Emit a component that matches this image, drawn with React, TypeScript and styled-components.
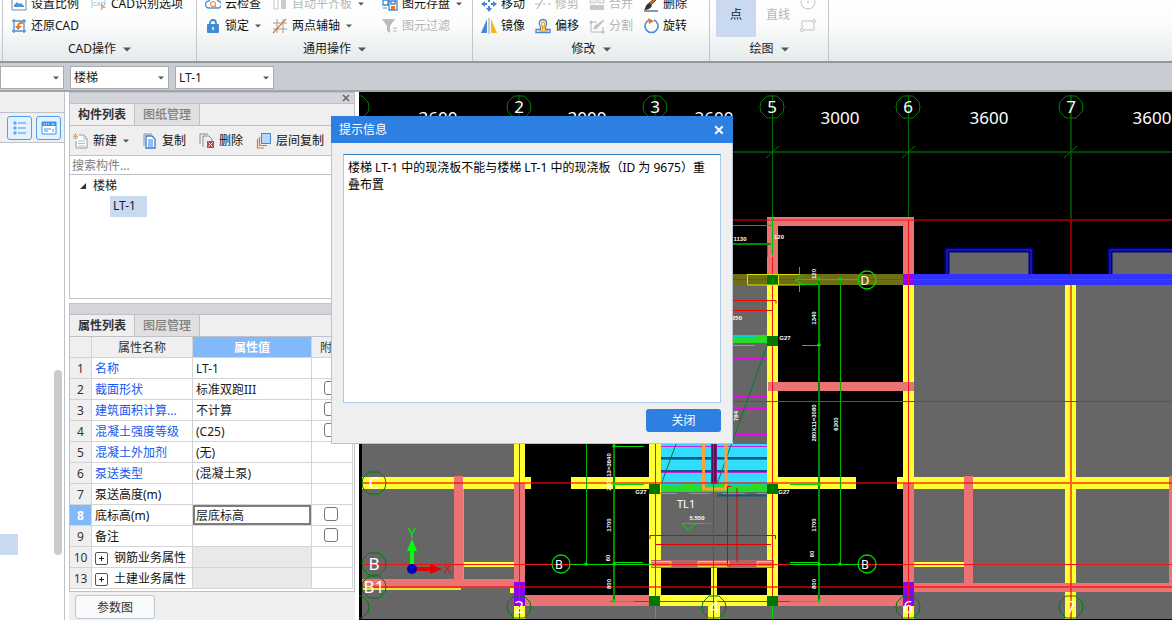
import React from 'react';
import styled, { createGlobalStyle, css } from 'styled-components';

const GlobalStyle = createGlobalStyle`
  *, *::before, *::after { box-sizing: border-box; }
  body {
    margin: 0;
    background: #fff;
    color: #1a1a1a;
    font: 12px/16px "Noto Sans", "Noto Sans CJK SC", sans-serif;
  }
  button, input, select, textarea { font: inherit; color: inherit; }
`;

const Page = styled.div`
  position: relative;
  display: flex;
  flex-direction: column;
  height: 100vh;
  overflow: hidden;
`;

/* ---------- Ribbon ---------- */

const Ribbon = styled.header`
  display: flex;
  flex: none;
  height: 63px;
  overflow: hidden;
  padding-left: 2px;
  background: linear-gradient(#ffffff, #fbfcfc 40%, #e6eaea);
  border-bottom: 2px solid #92979c;
`;

const Group = styled.section<{ $width: number }>`
  display: flex;
  flex-direction: column;
  justify-content: flex-end;
  flex: none;
  width: ${p => p.$width}px;
  border-right: 1px solid #c3c5c8;
  &:first-child { border-left: 1px solid #c3c5c8; }
`;

const Tools = styled.div<{ $columns: string }>`
  display: grid;
  grid-template-columns: ${p => p.$columns};
  grid-auto-rows: 22px;
  padding-left: 8px;
`;

const Tool = styled.button`
  display: flex;
  align-items: center;
  gap: 4px;
  padding: 0;
  border: 0;
  background: none;
  white-space: nowrap;
  color: #111;
  &:disabled { color: #b4b6b8; }
`;

const GroupTitle = styled.h2`
  display: flex;
  flex: none;
  align-items: center;
  justify-content: center;
  gap: 5px;
  height: 24px;
  margin: 0;
  font-size: 12px;
  font-weight: 400;
`;

const DrawTools = styled.div`
  display: flex;
  align-items: flex-end;
  gap: 10px;
  height: 44px;
  padding-left: 6px;
`;

const BigTool = styled.button<{ $active?: boolean }>`
  display: flex;
  align-items: flex-end;
  justify-content: center;
  width: ${p => (p.$active ? 40 : 24)}px;
  height: 44px;
  padding: 0 0 14px;
  border: 0;
  white-space: nowrap;
  background: ${p => (p.$active ? '#c9d9f0' : 'none')};
  &:disabled { color: #b4b6b8; }
`;

const ShapeColumn = styled.div`
  display: grid;
  gap: 6px;
  padding-bottom: 4px;
`;

const Caret = ({ size = 6 }: { size?: number }) => (
  <svg width={size} height={size / 2 + 1} viewBox="0 0 8 4" aria-hidden="true" style={{ marginLeft: 2 }}>
    <path d="M0 0h8L4 4z" fill="#555" />
  </svg>
);

const icons: Record<string, React.ReactNode> = {
  scale: <><path d="M1 2h14v12H1z" fill="#fff" stroke="#7d8a96" /><path d="M3 11V9l3-3 2 2 2-1 3 3v1z" fill="#4b94dc" /></>,
  cadId: <><path d="M1 12V3h13v6" fill="none" stroke="#a9c6e6" /><text x="2" y="10" fontSize="6" fill="#7badde">CAD</text><path d="M10 7l5 5-3 0-2 3z" fill="#f0a080" /></>,
  restore: <><path d="M3 1v14M13 1v14M1 3h14M1 13h14" fill="none" stroke="#4d8fcf" strokeWidth="1.3" /><path d="M12 5C9 4 7 6 7 9" fill="none" stroke="#ec7420" strokeWidth="2" /><path d="M4 8l3 4 4-4z" fill="#ec7420" /></>,
  cloud: <><path d="M4 12a3.500 3.500 0 010-7 5 5 0 019 0 3.500 3.500 0 010 7z" fill="none" stroke="#4d94e0" strokeWidth="1.400" /><circle cx="8" cy="8" r="2.500" fill="none" stroke="#ec7420" /><path d="M10 10l2 2" stroke="#ec7420" /></>,
  level: <><path d="M2 2h4v11H2z" fill="none" stroke="#c7c7c7" /><path d="M9 2h5v11H9z" fill="#ccc" /></>,
  save: <><path d="M1 4h5v5H1zM7 5h8v9H7zM9 5v3h4V5" fill="#fff" stroke="#4289ce" strokeWidth="1.300" /><path d="M9 10h4v4H9z" fill="#ec7420" /><path d="M1 12h4" stroke="#4289ce" /></>,
  lock: <><path d="M5 7V5a3 3 0 016 0v2" fill="none" stroke="#4389d5" strokeWidth="1.800" /><rect x="2" y="6" width="12" height="9" rx="1" fill="#4389d5" /><path d="M8 9v3" stroke="#fff" strokeWidth="1.500" /></>,
  axis: <><path d="M5 1v14M11 1v14M1 5h14M1 11h14" fill="none" stroke="#9aa0a5" /><path d="M1 15L14 1" stroke="#ec7420" strokeWidth="1.300" /></>,
  funnel: <><path d="M0 1h13L8 8v7l-3-2V8z" fill="#bbb" /><path d="M11 10h4M11 13h4" stroke="#bbb" /></>,
  move: <path d="M8 0l3 4H9v2H7V4H5zM8 16l-3-4h2v-2h2v2h2zM0 8l4-3v2h2v2H4v2zM16 8l-4 3V9h-2V7h2V5z" fill="#4389d5" />,
  trim: <><path d="M0 8h6M8 8h3M13 8h3" stroke="#bbb" /><path d="M2 13L8 3" stroke="#bbb" strokeWidth="1.300" /></>,
  merge: <><path d="M1 2h6v5H1zM9 2h6v5H9z" fill="#eee" stroke="#ccc" /><path d="M1 9h14v5H1z" fill="#c8c8c8" /></>,
  brush: <><path d="M14 1l1 1-7 7-2-2z" fill="#d97420" stroke="#54402c" /><path d="M6 7l3 3c-2 3-5 4-8 4 2-2 1-5 5-7z" fill="#33302c" /><path d="M1 15h14" stroke="#333" /></>,
  mirror: <><path d="M6 1v14H0z" fill="#4389d5" /><path d="M8 0v16" stroke="#999" /><path d="M10 1v14h6z" fill="#f5b51c" /></>,
  offset: <><path d="M1 14.500h14v-3h-4.500V9C13 5 11.500 1.500 8 1.500S3 5 5.500 9v2.500H1z" fill="none" stroke="#4389d5" strokeWidth="1.300" /><path d="M4 13h9M7.500 12V8.500C6 6 6.500 4 8.200 4S10.500 6 9 8.500V11" fill="none" stroke="#f2a916" strokeWidth="1.400" /></>,
  split: <><path d="M8 4H2v10h12V9" fill="none" stroke="#b8b8b8" /><path d="M15 2L8 10l-3 1 1-3z" fill="#ccc" stroke="#b8b8b8" /><circle cx="2" cy="4" r="1.500" fill="#bbb" /><circle cx="14" cy="14" r="1.500" fill="#bbb" /></>,
  rotate: <><path d="M6 2a6.500 6.500 0 105 0" fill="none" stroke="#4389d5" strokeWidth="1.500" /><path d="M5 0l6 3-5 3z" fill="#ec7420" /></>,
  circle: <><circle cx="8" cy="7" r="7" fill="none" stroke="#c2c2c2" /><circle cx="8" cy="7" r="1" fill="#c2c2c2" /></>,
  rect: <><path d="M2 4h12v9H2z" fill="none" stroke="#c2c2c2" /><circle cx="14" cy="4" r="1.500" fill="#fff" stroke="#c2c2c2" /><circle cx="2" cy="13" r="1.500" fill="#fff" stroke="#c2c2c2" /></>,
  list: <><path d="M2 2h2v2H2zM2 7h2v2H2zM2 12h2v2H2z" fill="none" stroke="#3f93e8" /><path d="M6 3h8M6 8h8M6 13h8" stroke="#3f93e8" /></>,
  window: <><path d="M1 2h14v12H1z" fill="#fff" stroke="#3f93e8" /><path d="M1 2h14v4H1z" fill="#3f93e8" /><path d="M3 4h1M5 4h1M7 4h1M11 4h2" stroke="#fff" /><path d="M3 9h7M3 11h4M12 9v3" stroke="#3f93e8" /></>,
  create: <><path d="M6 2h5l3 4v9H3V8" fill="#fff" stroke="#8e9aa4" /><path d="M11 2v4h4M5 8h7M5 10.500h7M5 13h7" fill="none" stroke="#b2bac0" /><path d="M0 1l5 5M5 1L0 6M2.500 0v7M0 3.500h5" stroke="#f0a020" strokeWidth=".8" /></>,
  copy: <><path d="M2 13V1h8" fill="none" stroke="#7d95ad" /><path d="M4 3h6l3 3v9H4z" fill="#fff" stroke="#2d7dd2" strokeWidth="1.300" /><path d="M6 7h5M6 9h5M6 11h5M6 13h5" stroke="#2d7dd2" /></>,
  remove: <><path d="M1 11V1h8M4 14V3h6l3 3v2" fill="none" stroke="#82909b" /><path d="M8 8h7v7H8z" fill="#cf3e42" /><path d="M9.500 9.500l4 4M13.500 9.500l-4 4" stroke="#fff" /></>,
  layers: <><path d="M5.500.500h9v10h-9z" fill="#b9d6fb" stroke="#3c86d2" /><path d="M3.500 4v8.500H11M1.500 6v9H8" fill="none" stroke="#ec7420" strokeWidth="1.200" /></>,
};

const Icon = ({ name, size = 16 }: { name: string; size?: number }) => (
  <svg width={size} height={size} viewBox="0 0 16 16" aria-hidden="true">{icons[name]}</svg>
);

type ToolSpec = [icon: string, label: string, options?: { off?: boolean; menu?: boolean }];

const ToolButton = ({ spec: [icon, label, options = {}] }: { spec: ToolSpec }) => (
  <Tool type="button" disabled={options.off}>
    <Icon name={icon} />{label}{options.menu && <Caret />}
  </Tool>
);

const commonTools: ToolSpec[] = [
  ['cloud', '云检查'],
  ['level', '自动平齐板', { off: true, menu: true }],
  ['save', '图元存盘', { menu: true }],
  ['lock', '锁定', { menu: true }],
  ['axis', '两点辅轴', { menu: true }],
  ['funnel', '图元过滤', { off: true }],
];

const editTools: ToolSpec[] = [
  ['move', '移动'], ['trim', '修剪', { off: true }], ['merge', '合并', { off: true }], ['brush', '删除'],
  ['mirror', '镜像'], ['offset', '偏移'], ['split', '分割', { off: true }], ['rotate', '旋转'],
];

/* ---------- Element selectors ---------- */

const SelectorBar = styled.nav`
  display: flex;
  flex: none;
  align-items: center;
  gap: 6px;
  height: 29px;
  padding-top: 2px;
  background: #c9ccd2;
  border-bottom: 2px solid #a0a5a9;
`;

const ComboFrame = styled.label<{ $width: number }>`
  display: grid;
  align-items: center;
  width: ${p => p.$width}px;
  height: 23px;
  background: #fff;
  border: 1px solid #a9abad;
  > * { grid-area: 1 / 1; }
  > svg { justify-self: end; margin-right: 4px; pointer-events: none; }
`;

const ComboSelect = styled.select`
  width: 100%;
  height: 21px;
  padding: 0 3px;
  border: 0;
  background: none;
  appearance: none;
`;

const Combo = ({ width, value, label }: { width: number; value: string; label: string }) => (
  <ComboFrame $width={width}>
    <ComboSelect aria-label={label} defaultValue={value}><option>{value}</option></ComboSelect>
    <Caret />
  </ComboFrame>
);

/* ---------- Docked panels ---------- */

const Workspace = styled.main`
  display: flex;
  flex: 1;
  min-height: 0;
`;

const Navigator = styled.aside`
  display: flex;
  flex-direction: column;
  flex: none;
  width: 65px;
  border-right: 1px solid #bfc1c8;
`;

const NavigatorTitle = styled.div`
  height: 21px;
  background: #efefef;
  border-bottom: 1px solid #bfc1c8;
`;

const ViewSwitch = styled.div`
  display: flex;
  align-items: center;
  justify-content: flex-end;
  gap: 4px;
  height: 30px;
  padding-right: 3px;
  background: #efefef;
  border-bottom: 1px solid #bfc1c8;
`;

const ViewButton = styled.button`
  display: grid;
  place-items: center;
  width: 25px;
  height: 24px;
  padding: 0;
  border: 1px solid #4f9ff0;
  border-radius: 3px;
  background: #e4f1fe;
`;

const NavigatorBody = styled.div`
  display: flex;
  flex: 1;
  align-items: flex-end;
  justify-content: space-between;
  padding: 0 2px 65px 0;
`;

const NavigatorMark = styled.div`
  width: 18px;
  height: 21px;
  background: #c9d9f0;
`;

const ScrollThumb = styled.div`
  width: 8px;
  height: 185px;
  border-radius: 4px;
  background: #cbcbcb;
`;

const Dock = styled.div`
  display: flex;
  flex-direction: column;
  flex: none;
  width: 286px;
  margin: 0 4px;
`;

const Panel = styled.section<{ $grow?: boolean }>`
  display: flex;
  flex-direction: column;
  min-height: 0;
  flex: ${p => (p.$grow ? '1' : 'none')};
  margin-bottom: ${p => (p.$grow ? 4 : 0)}px;
  border: 1px solid #bfc1c8;
`;

const PanelBar = styled.div`
  display: flex;
  flex: none;
  align-items: center;
  justify-content: flex-end;
  height: 10px;
  padding-right: 4px;
  background: #d4d5da;
`;

const CloseButton = styled.button`
  display: grid;
  place-items: center;
  padding: 0;
  border: 0;
  background: none;
`;

const Cross = ({ size, color }: { size: number; color: string }) => (
  <svg width={size} height={size} viewBox="0 0 8 8" aria-hidden="true">
    <path d="M1 1l6 6M7 1L1 7" stroke={color} strokeWidth="1.500" />
  </svg>
);

const Tabs = styled.div`
  display: flex;
  flex: none;
  height: 23px;
  background: #efefef;
  border-top: 1px solid #bfc1c8;
  border-bottom: 1px solid #bfc1c8;
`;

const Tab = styled.button<{ $active?: boolean }>`
  width: 65px;
  padding: 0;
  border: 0;
  border-right: 1px solid #bfc1c8;
  white-space: nowrap;
  font-weight: 700;
  ${p => p.$active
    ? css`background: #efefef; color: #333;`
    : css`background: #e0e0e0; color: #808080; font-weight: 500;`}
`;

const ListToolbar = styled.div`
  display: flex;
  flex: none;
  gap: 13px;
  height: 30px;
  padding-left: 3px;
  background: #efefef;
  border-bottom: 1px solid #bfc1c8;
`;

const Search = styled.input`
  flex: none;
  height: 19px;
  padding: 0 2px;
  border: 0;
  border-bottom: 1px solid #bfc1c8;
  outline: 0;
  &::placeholder { color: #808080; opacity: 1; }
`;

const Tree = styled.ul`
  flex: 1;
  margin: 0;
  padding: 0 0 0 10px;
  list-style: none;
`;

const TreeParent = styled.li`
  display: flex;
  align-items: center;
  gap: 7px;
  height: 21px;
`;

const TreeLeaf = styled.li`
  width: 37px;
  margin-left: 30px;
  padding: 2px 3px 3px;
  background: #c9d9f0;
`;

const PropertyTable = styled.table`
  width: 283px;
  margin-bottom: 2px;
  table-layout: fixed;
  border-collapse: separate;
  border-spacing: 0;
  tr { height: 21px; }
  th, td {
    height: 21px;
    padding: 2px 3px 0;
    overflow: hidden;
    white-space: nowrap;
    font-weight: 400;
    text-align: left;
    border-right: 1px solid #d4d4d4;
    border-bottom: 1px solid #d4d4d4;
  }
`;

const HeadCell = styled.th<{ $active?: boolean }>`
  && {
    text-align: center;
    background: ${p => (p.$active ? '#82b9fa' : '#efefef')};
    color: ${p => (p.$active ? '#fff' : '#333')};
    font-weight: ${p => (p.$active ? 700 : 400)};
    &:last-child { padding-left: 8px; text-align: left; }
  }
`;

const RowNumber = styled.th<{ $active?: boolean }>`
  && {
    padding: 2px 0 0;
    text-align: center;
    background: ${p => (p.$active ? '#82b9fa' : '#efefef')};
    color: ${p => (p.$active ? '#fff' : '#333')};
    font-weight: ${p => (p.$active ? 700 : 400)};
  }
`;

const NameCell = styled.td<{ $linked?: boolean }>`
  color: ${p => (p.$linked ? '#1459f0' : '#111')};
`;

const ValueCell = styled.td<{ $state?: 'editing' | 'group' }>`
  background: ${p => (p.$state === 'group' ? '#e9e9e9' : '#fff')};
  ${p => p.$state === 'editing' && css`box-shadow: inset 0 0 0 2px #7d7d7d;`}
`;

const CheckCell = styled.td`
  && { text-align: center; line-height: 0; padding: 0 5px 3px 3px; }
`;

const Check = styled.input`
  width: 14px;
  height: 14px;
  margin: 0;
  appearance: none;
  border: 1px solid #777;
  border-radius: 3px;
  background: #fff;
`;

const Expander = styled.button`
  display: inline-grid;
  place-items: center;
  width: 13px;
  height: 13px;
  margin: -2px 6px -2px 0;
  padding: 0;
  vertical-align: -1px;
  border: 1px solid #555;
  border-radius: 2px;
  background: #fff;
`;

const NameContent = styled.span`
  display: flex;
  align-items: center;
`;

const PanelFooter = styled.footer`
  flex: none;
  height: 28px;
  padding: 3px 6px 0;
  background: #efefef;
`;

const ParameterButton = styled.button`
  width: 80px;
  height: 24px;
  padding: 1px 0 0;
  border: 1px solid #b9c6d6;
  border-radius: 3px;
  background: #fafafa;
  color: #333;
`;

interface Property {
  no: number;
  name: string;
  value?: string;
  linked?: boolean;
  check?: boolean;
  group?: boolean;
  editing?: boolean;
}

const properties: Property[] = [
  { no: 1, name: '名称', value: 'LT-1', linked: true },
  { no: 2, name: '截面形状', value: '标准双跑III', linked: true, check: true },
  { no: 3, name: '建筑面积计算...', value: '不计算', linked: true, check: true },
  { no: 4, name: '混凝土强度等级', value: '(C25)', linked: true, check: true },
  { no: 5, name: '混凝土外加剂', value: '(无)', linked: true },
  { no: 6, name: '泵送类型', value: '(混凝土泵)', linked: true },
  { no: 7, name: '泵送高度(m)' },
  { no: 8, name: '底标高(m)', value: '层底标高', check: true, editing: true },
  { no: 9, name: '备注', check: true },
  { no: 10, name: '钢筋业务属性', group: true },
  { no: 13, name: '土建业务属性', group: true },
];

const PropertyRow = ({ item }: { item: Property }) => (
  <tr>
    <RowNumber scope="row" $active={item.editing}>{item.no}</RowNumber>
    <NameCell $linked={item.linked}>
      <NameContent>
        {item.group && (
          <Expander type="button" aria-label={`展开${item.name}`}>
            <svg width="7" height="7" viewBox="0 0 7 7"><path d="M3.500 1v5M1 3.500h5" stroke="#222" /></svg>
          </Expander>
        )}
        {item.name}
      </NameContent>
    </NameCell>
    <ValueCell $state={item.editing ? 'editing' : item.group ? 'group' : undefined}>{item.value}</ValueCell>
    <CheckCell>{item.check && <Check type="checkbox" aria-label={`附加${item.name}`} />}</CheckCell>
  </tr>
);

/* ---------- Drawing ---------- */

const Viewport = styled.div`
  flex: 1;
  min-width: 0;
  background: #000;
`;

const Drawing = styled.svg`
  display: block;
  width: 100%;
  height: 100%;
  font-family: "Noto Sans", sans-serif;
`;

const YELLOW = '#ffff32';
const PINK = '#eb7373';
const SLAB = '#666';
const GREEN = '#00dc00';

const Bar = ({ x, y, x2, y2, fill }: { x: number; y: number; x2: number; y2: number; fill: string }) => (
  <rect x={x} y={y} width={x2 - x} height={y2 - y} fill={fill} />
);

const GridMark = ({ x, y, label }: { x: number; y: number; label?: string }) => (
  <g>
    <polygon
      points={[[-5, -11], [5, -11], [11, -5], [12, 0], [11, 5], [5, 11], [-5, 11], [-11, 5], [-12, 0], [-11, -5]]
        .map(([dx, dy]) => `${x + dx},${y + dy}`).join(' ')}
      fill="none" stroke="#007d00"
    />
    <text x={x} y={y + 6} fontSize="17" fill="#fff" textAnchor="middle">{label}</text>
  </g>
);

const SmallMark = ({ x, y, label }: { x: number; y: number; label: string }) => (
  <g>
    <circle cx={x} cy={y} r="9" fill="none" stroke={GREEN} strokeWidth="1.300" />
    <text x={x - 2} y={y + 5} fontSize="12" fill="#fff" textAnchor="middle">{label}</text>
  </g>
);

const Note = ({ x, y, text, turn = true }: { x: number; y: number; text: string; turn?: boolean }) => (
  <text
    x={x} y={y} fontSize="6" fontFamily="Liberation Sans, sans-serif" fontWeight="700" fill="#fff"
    textAnchor="middle" dominantBaseline="central" transform={turn ? `rotate(-90 ${x} ${y})` : undefined}
  >{text}</text>
);

const Plan = () => (
  <Drawing viewBox="359 92 813 528" preserveAspectRatio="xMinYMin slice" role="img" aria-label="楼层平面图">
    {/* slabs */}
    <Bar x={362} y={285} x2={519} y2={619} fill={SLAB} />
    <Bar x={519} y={606} x2={1172} y2={619} fill={SLAB} />
    <Bar x={661} y={285} x2={767} y2={561} fill={SLAB} />
    <Bar x={914} y={285} x2={1172} y2={619} fill={SLAB} />

    {/* grid head: lines, ticks */}
    <path d="M359 152H1172" stroke="#004600" strokeWidth="2" />
    <path d="M519 95V218M655 95V218M772.500 95V218M908.500 95V218" stroke="#006e00" />
    <path d="M1071 95V218" stroke="#004600" strokeWidth="2" />
    <path d="M766 158l13-12M902 158l13-12M1064 158l13-12" stroke="#007d00" />
    <path d="M359 220H1172M1071 218V274" stroke="#820000" strokeWidth="2" />

    {/* bay windows */}
    <path d="M947 274V250h84v24M1110 274V250H1180V274" fill={SLAB} stroke="#00007d" strokeWidth="5" strokeLinejoin="round" />
    <path d="M947 274V250h84v24M1110 274V250H1180V274" fill="none" stroke="#2828e6" />

    {/* beams and walls */}
    <Bar x={733} y={274} x2={903} y2={285} fill="#6e6e14" />
    <Bar x={767} y={217} x2={914} y2={226} fill={PINK} />
    <Bar x={767} y={217} x2={778} y2={274} fill={PINK} />
    <Bar x={903} y={217} x2={914} y2={274} fill={PINK} />
    <Bar x={914} y={274} x2={1172} y2={285} fill="#3232ff" />
    <Bar x={903} y={274} x2={914} y2={285} fill="#9600ff" />
    <Bar x={767} y={285} x2={778} y2={606} fill={YELLOW} />
    <Bar x={903} y={285} x2={914} y2={483} fill={YELLOW} />
    <Bar x={1065} y={285} x2={1076} y2={619} fill={YELLOW} />
    <Bar x={514} y={285} x2={525} y2={483} fill={YELLOW} />
    <Bar x={649} y={285} x2={661} y2={606} fill={YELLOW} />
    <Bar x={362} y={477} x2={531} y2={489} fill={YELLOW} />
    <Bar x={571} y={477} x2={649} y2={489} fill={YELLOW} />
    <Bar x={778} y={477} x2={856} y2={489} fill={YELLOW} />
    <Bar x={897} y={477} x2={1169} y2={489} fill={YELLOW} />
    <Bar x={768} y={382} x2={914} y2={391} fill={PINK} />
    <Bar x={463} y={562} x2={514} y2={567} fill={YELLOW} />
    <Bar x={914} y={562} x2={964} y2={567} fill={YELLOW} />
    <path d="M463.500 489V579" stroke="#b4b432" />
    <Bar x={362} y={588} x2={461} y2={590} fill="#e6e632" />
    <Bar x={510} y={588} x2={514} y2={593} fill={YELLOW} />
    <Bar x={362} y={579} x2={514} y2={588} fill={PINK} />
    <Bar x={454} y={476} x2={463} y2={580} fill={PINK} />
    <Bar x={964} y={476} x2={973} y2={584} fill={PINK} />
    <Bar x={1169} y={476} x2={1172} y2={584} fill={PINK} />
    <Bar x={914} y={583} x2={1172} y2={592} fill={PINK} />
    <Bar x={525} y={595} x2={649} y2={606} fill={PINK} />
    <Bar x={778} y={595} x2={903} y2={606} fill={PINK} />
    {[514, 903].map(x => (
      <g key={x}>
        <Bar x={x} y={483} x2={x + 11} y2={582} fill={PINK} />
        <Bar x={x} y={582} x2={x + 11} y2={606} fill="#8c00ff" />
        <Bar x={x} y={606} x2={x + 11} y2={619} fill={YELLOW} />
      </g>
    ))}

    {/* stair flights */}
    <Bar x={661} y={444} x2={767} y2={484} fill="#32dcff" />
    <path d="M661 458H767M661 471H767M717 495.500H767" stroke="#005f82" strokeWidth="2" />
    <path d="M661 446.500H767M661 459.500H767M661 472.500H767" stroke="#d21ee6" />
    <path d="M733 358.500h34M733 371.500h34M733 383.500h34M733 396.500h34M733 408.500h34M733 421.500h34M733 434.500h34" stroke="#f000f0" />
    <Bar x={711} y={444} x2={717} y2={484} fill="#50144b" />
    <path d="M711.500 444V484M716.500 444V484" stroke="#8c148c" />
    <path d="M662 482L676 444M717 484L767 346" stroke="#007d28" />
    <Bar x={661} y={484} x2={767} y2={492} fill="#28dc28" />
    <Bar x={733} y={335} x2={767} y2={343} fill="#28dc28" />
    <path d="M661 484.500H767M655 493.500H767M733 336.500H767M733 345.500H767" stroke="#00d2dc" strokeDasharray="22 12" />
    <path d="M703.500 444V489H726V444" fill="none" stroke="#ffa03c" strokeWidth="3" />

    {/* landing */}
    <Bar x={651} y={560} x2={774} y2={568} fill="#b46464" />
    <Bar x={661} y={568} x2={767} y2={595} fill="#000" />
    <Bar x={661} y={595} x2={767} y2={606} fill={YELLOW} />
    <Bar x={711} y={568} x2={717} y2={596} fill={YELLOW} />
    <Bar x={708} y={606} x2={720} y2={619} fill={YELLOW} />
    <path d="M651 561.500h20v5h-20zM698 561.500h31v5h-31zM757 561.500h16v5h-16z" fill="#eb7364" stroke="#e6d232" />
    <path d="M650 539v-3.500h125.500v3.500M655 544.500H771M737 488v74M731 486.500h-3.500v79.500h3" fill="none" stroke="#dc0000" />

    {/* axis lines */}
    <path d="M362 483H1172M362 587H1172M1071 285V619" stroke="#ff0000" strokeOpacity=".6" strokeWidth="2" />
    <path d="M362 564.500H1172M733 401.500H1172M733 279.500H1172M519.500 444V619M655.500 444V606M713.500 444V619M772.500 257V606M908.500 220V619M767 220H914M610 601.500H790" stroke="#f01414" />
    <path d="M733 300.500h43v3M733 310.500h39" fill="none" stroke="#ff0000" />

    {/* columns */}
    {[[649, 484], [767, 484], [649, 596], [767, 596], [767, 336], [767, 275]].map(([x, y]) => (
      <Bar key={`${x}-${y}`} x={x} y={y} x2={x + 11} y2={y + 10} fill="#007800" />
    ))}
    <path d="M747.500 274.500H799M747.500 285H799M747.500 274.500V285M778.500 274.500V285" stroke="#dcdc00" fill="none" />

    {/* dimensions */}
    <path d="M614 444V601M819 279V601" stroke="#008c00" strokeWidth="2" />
    <path d="M586.500 444V564M840.500 279V564M733 225.500h40M733 323.500h14M767.500 244v13M772.500 215v40" stroke="#00b400" />
    <path d="M733 244h39" stroke="#008c00" strokeWidth="2" />
    <path d="M614 446.500h30M614 484.500h30M571 564.500h80M614 562.500h29M614 601.500h20M790 564.500h69M790 562.500h29M790 601.500h29M802 345.500h18M797 279.500h61M800 284.500h19M790 484.500h29M655.500 606v13M772.500 606v13" stroke={GREEN} />
    <path d="M799.500 267V276M799.500 282V292M804 275l-9 5 9 5" fill="none" stroke={GREEN} />
    {[[586, 564], [614, 446], [614, 484], [614, 564], [614, 601], [819, 279], [819, 345], [819, 484], [819, 564], [819, 601], [840, 279], [840, 564], [772, 225], [772, 244]].map(([x, y]) => (
      <circle key={`${x}-${y}`} cx={x} cy={y} r="1.800" fill={GREEN} />
    ))}
    <path d="M682 523.500h29M682 524l6.500 6 6.500-6" fill="none" stroke={GREEN} />

    <Note x={609} y={472} text="280X13=3640" />
    <Note x={609} y={525} text="1700" />
    <Note x={608} y={558} text="60" />
    <Note x={609} y={584} text="800" />
    <Note x={814} y={274} text="120" />
    <Note x={814} y={318} text="1340" />
    <Note x={814} y={423} text="280X11=3080" />
    <Note x={836} y={424} text="6300" />
    <Note x={814} y={525} text="1700" />
    <Note x={812} y={554} text="60" />
    <Note x={814} y={584} text="800" />
    <Note x={736} y={416} text="784" />
    <Note turn={false} x={740} y={239} text="1130" />
    <Note turn={false} x={779} y={237} text="120" />
    <Note turn={false} x={737} y={318} text="250" />
    <Note turn={false} x={785} y={338} text="G27" />
    <Note turn={false} x={641} y={492} text="G27" />
    <Note turn={false} x={784} y={492} text="G27" />
    <Note turn={false} x={697} y={518} text="5.550" />
    <text x="677" y="508" fontSize="11" fill="#fff">TL1</text>

    {/* grid labels */}
    <g fontSize="17" fill="#fff" textAnchor="middle">
      <text x="438" y="124">3600</text>
      <text x="587" y="124">3000</text>
      <text x="714" y="124">2600</text>
      <text x="840" y="124">3000</text>
      <text x="989" y="124">3600</text>
      <text x="1152" y="124">3600</text>
    </g>
    <GridMark x={357} y={107} />
    <GridMark x={519} y={107} label="2" />
    <GridMark x={655} y={107} label="3" />
    <GridMark x={772} y={107} label="5" />
    <GridMark x={908} y={107} label="6" />
    <GridMark x={1071} y={107} label="7" />
    <GridMark x={374} y={483} label="C" />
    <GridMark x={374} y={564} label="B" />
    <GridMark x={374} y={587} label="B1" />
    <GridMark x={357} y={607} />
    <GridMark x={519} y={607} label="2" />
    <GridMark x={714} y={607} label="4" />
    <GridMark x={908} y={607} label="6" />
    <GridMark x={1071} y={607} label="7" />
    <SmallMark x={561} y={564} label="B" />
    <SmallMark x={867} y={564} label="B" />
    <SmallMark x={867} y={280} label="D" />

    {/* coordinate axes */}
    <path d="M412 569V550" stroke="#00ff00" strokeWidth="4" />
    <path d="M407 551l5-12 5 12z" fill="#00ff00" />
    <path d="M412 569h20" stroke="#e60000" strokeWidth="4" />
    <path d="M430 564l12 5-12 5z" fill="#e60000" />
    <circle cx="412" cy="569" r="5" fill="#0000be" />
    <text x="412" y="538" fontSize="14" fill="#00e600" textAnchor="middle">Y</text>
    <text x="448" y="574" fontSize="14" fill="#e61414" textAnchor="middle">X</text>
  </Drawing>
);

/* ---------- Message dialog ---------- */

const Dialog = styled.div`
  position: absolute;
  left: 331px;
  top: 116px;
  display: flex;
  flex-direction: column;
  width: 402px;
  height: 328px;
  background: #efefef;
  border: 1px solid #b9c3d2;
  border-top: 0;
`;

const DialogTitle = styled.div`
  display: flex;
  align-items: center;
  justify-content: space-between;
  height: 27px;
  margin: 0 -1px;
  padding: 0 9px 0 8px;
  background: #2d7fe2;
  color: #fff;
`;

const Message = styled.textarea`
  flex: 1;
  margin: 11px 11px 0;
  padding: 4px;
  border: 1px solid #a9cbe8;
  border-top-color: #2f7fc0;
  outline: 0;
  resize: none;
  overflow: hidden;
  background: #fff;
  color: #000;
  line-height: 17px;
`;

const DialogActions = styled.div`
  display: flex;
  justify-content: flex-end;
  padding: 6px 11px 11px;
`;

const PrimaryButton = styled.button`
  width: 75px;
  height: 23px;
  padding: 1px 0 0;
  border: 0;
  border-radius: 3px;
  background: #2d7fe2;
  color: #fff;
`;

export default function App() {
  return (
    <Page>
      <GlobalStyle />
      <Ribbon>
        <Group $width={195}>
          <Tools $columns="80px 1fr">
            <ToolButton spec={['scale', '设置比例']} />
            <ToolButton spec={['cadId', 'CAD识别选项']} />
            <ToolButton spec={['restore', '还原CAD']} />
          </Tools>
          <GroupTitle>CAD操作<Caret size={8} /></GroupTitle>
        </Group>
        <Group $width={276}>
          <Tools $columns="67px 110px 1fr">
            {commonTools.map(spec => <ToolButton key={spec[1]} spec={spec} />)}
          </Tools>
          <GroupTitle>通用操作<Caret size={8} /></GroupTitle>
        </Group>
        <Group $width={237}>
          <Tools $columns="repeat(4, 54px)">
            {editTools.map(spec => <ToolButton key={spec[1]} spec={spec} />)}
          </Tools>
          <GroupTitle>修改<Caret size={8} /></GroupTitle>
        </Group>
        <Group $width={119}>
          <DrawTools>
            <BigTool type="button" $active>点</BigTool>
            <BigTool type="button" disabled>直线</BigTool>
            <ShapeColumn><Icon name="circle" /><Icon name="rect" /></ShapeColumn>
          </DrawTools>
          <GroupTitle>绘图<Caret size={8} /></GroupTitle>
        </Group>
      </Ribbon>

      <SelectorBar>
        <Combo width={64} value="" label="楼层" />
        <Combo width={99} value="楼梯" label="构件类型" />
        <Combo width={99} value="LT-1" label="构件" />
      </SelectorBar>

      <Workspace>
        <Navigator>
          <NavigatorTitle />
          <ViewSwitch>
            <ViewButton type="button" aria-label="列表"><Icon name="list" /></ViewButton>
            <ViewButton type="button" aria-label="窗口"><Icon name="window" /></ViewButton>
          </ViewSwitch>
          <NavigatorBody><NavigatorMark /><ScrollThumb /></NavigatorBody>
        </Navigator>

        <Dock>
          <Panel $grow>
            <PanelBar>
              <CloseButton type="button" aria-label="关闭面板"><Cross size={8} color="#666" /></CloseButton>
            </PanelBar>
            <Tabs>
              <Tab type="button" $active>构件列表</Tab>
              <Tab type="button">图纸管理</Tab>
            </Tabs>
            <ListToolbar>
              <ToolButton spec={['create', '新建', { menu: true }]} />
              <ToolButton spec={['copy', '复制']} />
              <ToolButton spec={['remove', '删除']} />
              <ToolButton spec={['layers', '层间复制']} />
            </ListToolbar>
            <Search aria-label="搜索构件" placeholder="搜索构件..." />
            <Tree>
              <TreeParent>
                <svg width="6" height="6" viewBox="0 0 6 6" aria-hidden="true"><path d="M6 0v6H0z" fill="#333" /></svg>
                楼梯
              </TreeParent>
              <TreeLeaf>LT-1</TreeLeaf>
            </Tree>
          </Panel>

          <Panel>
            <PanelBar />
            <Tabs>
              <Tab type="button" $active>属性列表</Tab>
              <Tab type="button">图层管理</Tab>
            </Tabs>
            <PropertyTable>
              <colgroup>
                <col width="22" /><col width="101" /><col width="119" /><col width="41" />
              </colgroup>
              <thead>
                <tr>
                  <HeadCell />
                  <HeadCell>属性名称</HeadCell>
                  <HeadCell $active>属性值</HeadCell>
                  <HeadCell>附加</HeadCell>
                </tr>
              </thead>
              <tbody>
                {properties.map(item => <PropertyRow key={item.no} item={item} />)}
              </tbody>
            </PropertyTable>
          </Panel>
          <PanelFooter><ParameterButton type="button">参数图</ParameterButton></PanelFooter>
        </Dock>

        <Viewport><Plan /></Viewport>
      </Workspace>

      <Dialog role="dialog" aria-labelledby="message-title">
        <DialogTitle>
          <span id="message-title">提示信息</span>
          <CloseButton type="button" aria-label="关闭对话框"><Cross size={10} color="#fff" /></CloseButton>
        </DialogTitle>
        <Message
          readOnly
          aria-labelledby="message-title"
          value="楼梯 LT-1 中的现浇板不能与楼梯 LT-1 中的现浇板（ID 为 9675）重叠布置"
        />
        <DialogActions><PrimaryButton type="button">关闭</PrimaryButton></DialogActions>
      </Dialog>
    </Page>
  );
}
